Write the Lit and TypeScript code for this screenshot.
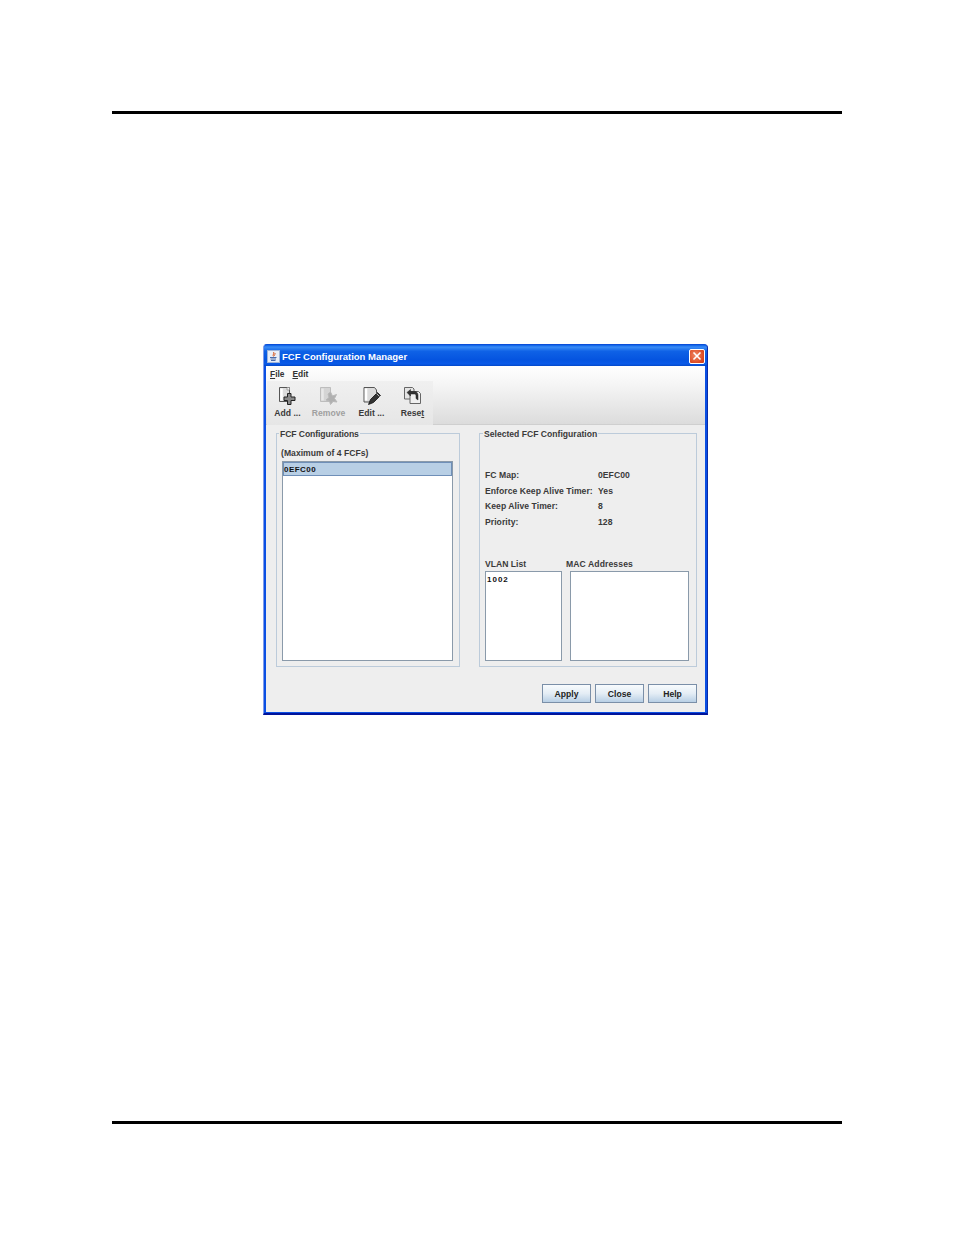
import { LitElement, html, css } from "lit";
import { customElement } from "lit/decorators.js";

const addIcon = html`<svg class="icon" viewBox="0 0 20 20" width="20" height="20">
  <path d="M1.5 1.5H11.5V15.5H1.5Z" fill="#dcdcdc" stroke="#555"/>
  <path d="M3.5 2.5V14.5" stroke="#fff" stroke-width="2.5"/>
  <path d="M9 1.5H11.5V4H9Z" fill="#f4f4f4" stroke="#888" stroke-width=".7"/>
  <path d="M9.5 7.5H13V11H17V14.5H13V18.5H9.5V14.5H6V11H9.5Z" fill="#8a8a8a" stroke="#222" stroke-width="1"/>
</svg>`;

const removeIcon = html`<svg class="icon" viewBox="0 0 20 20" width="20" height="20">
  <path d="M1.5 1.5H11.5V15.5H1.5Z" fill="#d4d4d4" stroke="#bdbdbd"/>
  <path d="M3.5 2.5V14.5" stroke="#e8e8e8" stroke-width="2.5"/>
  <path d="M11.5 6L13.5 10L17.5 8.5L15.5 12.5L18 16L14 15.5L11.5 18.5L10.5 15L7 14L10 11.5L9 8Z" fill="#b0b0b0" stroke="#b8b8b8"/>
</svg>`;

const editIcon = html`<svg class="icon" viewBox="0 0 20 20" width="20" height="20">
  <path d="M2 1.5H12.5L14.5 4V9L9 16H2Z" fill="#dcdcdc" stroke="#555"/>
  <path d="M4 2.5V14.5" stroke="#fff" stroke-width="2.5"/>
  <path d="M6.5 18.5L8.5 13.5L15.5 6.5L18.5 9.5L11.5 16.5Z" fill="#333" stroke="#111" stroke-width=".8"/>
  <path d="M14.5 7.5L17.5 10.5" stroke="#bbb"/>
</svg>`;

const resetIcon = html`<svg class="icon" viewBox="0 0 20 20" width="20" height="20">
  <path d="M1.5 1.5H9.5L11 3V13H1.5Z" fill="#e4e4e4" stroke="#666"/>
  <path d="M7 5.5H15.5L17.5 7.5V17.5H7Z" fill="#f0f0f0" stroke="#666"/>
  <path d="M4 6.5L7.5 3.5V5.5H11.5C14 5.5 15 7.5 15 9.5V14L13 12.5V10C13 8.5 12.5 8 11 8H7.5V10Z" fill="#333" stroke="#222" stroke-width=".5"/>
</svg>`;

const javaIcon = html`<svg class="javaicon" viewBox="0 0 13 13" width="13" height="13">
  <rect x=".5" y=".5" width="12" height="12" fill="#e8eef8" stroke="#9fb4d8"/>
  <path d="M6.5 2C8 3.5 5 4.5 6.5 6.5M8 3C8.5 4.5 7 5 7.5 6" stroke="#d8602a" stroke-width="1" fill="none"/>
  <path d="M3 7.5H9.5M3.5 9H9M4 10.5H8.5" stroke="#4a6aa8" stroke-width="1"/>
</svg>`;

@customElement("app-root")
export class AppRoot extends LitElement {
  static styles = css`
    :host { display: block; }
    * { box-sizing: border-box; }
    .page {
      width: 954px; height: 1235px; background: #fff;
      display: flex; flex-direction: column; align-items: flex-start;
      padding: 111px 112px 111px;
      font-family: "Liberation Sans", Arial, sans-serif;
    }
    .rule { width: 730px; height: 3px; background: #000; flex: none; }
    .spacer { flex: 1; }
    .window {
      margin: 230px 0 0 151px; width: 445px; height: 371px; flex: none;
      display: flex; flex-direction: column;
      border-radius: 4px 4px 0 0; overflow: hidden;
      background: #0a4fe3;
      border: 1px solid #7f9bea;
      border-bottom: 2px solid #00139a;
      border-right-color: #0a2ca8;
      border-top-color: #0a4fd8;
      padding: 0 2px 1px 2px;
    }
    .title {
      height: 21px; flex: none; margin: 0 -2px;
      padding: 1px 2px 0 3px;
      background: linear-gradient(#0a5fe8 0%, #3a8cf6 10%, #0f62e6 30%, #0554e0 70%, #0a5ae8 90%, #0348c8 100%);
      display: flex; align-items: center; gap: 2px;
      color: #fff; font-weight: bold; font-size: 9.5px;
    }
    .javaicon { flex: none; display: block; }
    .title span { flex: 1; }
    .close {
      width: 16px; height: 15px; flex: none; border: 1px solid #fff; border-radius: 2px;
      background: radial-gradient(circle at 40% 40%, #f08a68, #dc4a22 70%, #c83a18);
      display: flex; align-items: center; justify-content: center;
    }
    .chrome {
      height: 59px; flex: none;
      background: linear-gradient(#fff 0%, #f4f4f4 35%, #dcdcdc 100%);
      display: flex; flex-direction: column;
      border-bottom: 1px solid #cfcfcf;
    }
    .menu { height: 15px; flex: none; display: flex; gap: 8px; padding: 0 4px; align-items: center; font-size: 8.4px; font-weight: bold; color: #333; }
    .menu u { text-decoration: underline; text-underline-offset: 1px; }
    .toolbar {
      width: 166px; height: 44px; margin-left: 1px; flex: none; display: flex;
      background: linear-gradient(#f0f0f0, #e6e6e6);
    }
    .tool {
      display: flex; flex-direction: column; align-items: center;
      font-size: 8.6px; font-weight: bold; color: #3a3a3a; padding-top: 6px; width: 41px; flex: none; line-height: 11px;
    }
    .tool.edit { margin-left: 2px; }
    .tool.off { color: #a0a0a0; }
    .icon { display: block; height: 20px; margin-bottom: 1px; margin-top: -1px; }
    .tool span { margin-top: 1px; }
    .tool u { text-decoration: underline; }
    .content {
      flex: 1; background: #eee; padding: 2px 8px 0 10px;
      display: flex; flex-direction: column;
      font-size: 8.6px; font-weight: bold; color: #3a3a3a;
    }
    .panels { display: flex; gap: 19px; flex: none; }
    fieldset {
      margin: 0; padding: 0; min-width: 0; height: 240px;
      border: 1px solid #bccbda; flex: none;
    }
    legend { padding: 2px 1px 0; line-height: 10px; font-size: 8.6px; white-space: nowrap; }
    .left { width: 184px; padding: 0 5px; }
    .left legend { margin-left: -3px; letter-spacing: -.08px; }
    .right { width: 218px; padding: 0 5px; }
    .right legend { margin-left: -2px; }
    .hint { line-height: 10px; margin-top: 9px; margin-left: -1px; letter-spacing: .03px; }
    .box { background: #fff; border: 1px solid #8a9aaa; }
    .list { height: 200px; margin-top: 3px; width: 171px; }
    .sel {
      height: 14px; background: #b8cfe5; border: 1px solid #6f8fb8;
      font-size: 8px; line-height: 13px; padding-left: 0; letter-spacing: .45px; color: #111;
    }
    .info {
      display: grid; grid-template-columns: 113px auto; grid-auto-rows: 15.5px;
      line-height: 15.5px; margin-top: 29px; justify-content: start; letter-spacing: .05px;
    }
    .lists { display: grid; grid-template-columns: 77px 119px; column-gap: 8px; margin-top: 29px; }
    .lists .lbl { line-height: 10px; margin-bottom: 2px; }
    .lists .lbl.mac { margin-left: -4px; letter-spacing: .1px; }
    .lists .box { height: 90px; }
    .vlan { font-size: 8px; line-height: 16px; padding-left: 1px; letter-spacing: 1px; color: #111; }
    .buttons { display: flex; justify-content: flex-end; gap: 4px; margin-top: 17px; }
    button {
      width: 49px; height: 19px; padding: 0; font: inherit; color: #222;
      border: 1px solid #7a8fa8; background: linear-gradient(#f8fbfd, #e4edf5 50%, #b8cfe5);
    }
  `;

  render() {
    return html`<div class="page">
      <div class="rule"></div>
      <div class="window">
        <div class="title">${javaIcon}<span>FCF Configuration Manager</span>
          <div class="close"><svg viewBox="0 0 10 10" width="10" height="10"><path d="M1.5 1.5L8.5 8.5M8.5 1.5L1.5 8.5" stroke="#fff" stroke-width="1.6"/></svg></div>
        </div>
        <div class="chrome">
          <div class="menu"><span><u>F</u>ile</span><span><u>E</u>dit</span></div>
          <div class="toolbar">
            <div class="tool">${addIcon}<span>Add ...</span></div>
            <div class="tool off">${removeIcon}<span>Remove</span></div>
            <div class="tool edit">${editIcon}<span>Edit ...</span></div>
            <div class="tool">${resetIcon}<span>Rese<u>t</u></span></div>
          </div>
        </div>
        <div class="content">
          <div class="panels">
            <fieldset class="left">
              <legend>FCF Configurations</legend>
              <div class="hint">(Maximum of 4 FCFs)</div>
              <div class="box list"><div class="sel">0EFC00</div></div>
            </fieldset>
            <fieldset class="right">
              <legend>Selected FCF Configuration</legend>
              <div class="info">
                <span>FC Map:</span><span>0EFC00</span>
                <span>Enforce Keep Alive Timer:</span><span>Yes</span>
                <span>Keep Alive Timer:</span><span>8</span>
                <span>Priority:</span><span>128</span>
              </div>
              <div class="lists">
                <div class="lbl">VLAN List</div><div class="lbl mac">MAC Addresses</div>
                <div class="box vlan">1002</div><div class="box"></div>
              </div>
            </fieldset>
          </div>
          <div class="buttons"><button>Apply</button><button>Close</button><button>Help</button></div>
        </div>
      </div>
      <div class="spacer"></div>
      <div class="rule"></div>
    </div>`;
  }
}
